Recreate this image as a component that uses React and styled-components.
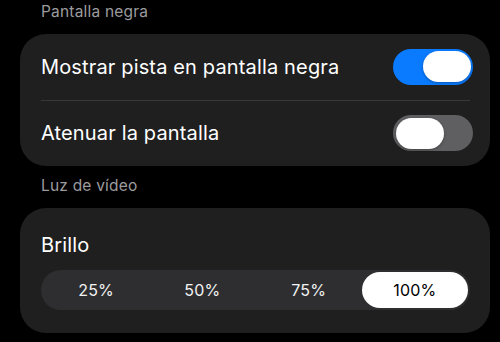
import React from 'react';
import styled, { createGlobalStyle } from 'styled-components';

const GlobalStyle = createGlobalStyle`
  html, body {
    margin: 0;
    padding: 0;
    background: #000;
  }
  body {
    font-family: Inter, "Noto Sans", "Liberation Sans", sans-serif;
    -webkit-font-smoothing: antialiased;
  }
`;

const options = ['25%', '50%', '75%', '100%'];

function App() {
  return (
    <Page>
      <GlobalStyle />
      <SectionTitle $top={2}>Pantalla negra</SectionTitle>
      <Card>
        <Row>
          <RowLabel>Mostrar pista en pantalla negra</RowLabel>
          <Toggle $on />
        </Row>
        <Divider />
        <Row>
          <RowLabel>Atenuar la pantalla</RowLabel>
          <Toggle />
        </Row>
      </Card>

      <SectionTitle $top={10}>Luz de vídeo</SectionTitle>
      <Card>
        <BrightnessBlock>
          <RowLabel>Brillo</RowLabel>
          <Segmented>
            {options.map((o) => (
              <Segment key={o} $active={o === '100%'}>{o}</Segment>
            ))}
          </Segmented>
        </BrightnessBlock>
      </Card>
    </Page>
  );
}

export default App;

const Page = styled.div`
  width: 500px;
  height: 342px;
  overflow: hidden;
  background: #000;
  padding: 0 10px 0 20px;
  box-sizing: border-box;
  display: flex;
  flex-direction: column;
`;

const SectionTitle = styled.div`
  padding: ${(p) => p.$top}px 0 0 21px;
  margin-bottom: 12px;
  height: 20px;
  line-height: 20px;
  font-size: 15.5px;
  color: #9c9c9f;
  letter-spacing: 0.2px;
`;

const Card = styled.div`
  background: #1f1f1f;
  border-radius: 26px;
  padding: 0 17px 0 21px;
`;

const Row = styled.div`
  display: flex;
  align-items: center;
  justify-content: space-between;
  height: 65.5px;
`;

const RowLabel = styled.span`
  font-size: 20px;
  color: #fff;
  letter-spacing: 0.15px;
`;

const Divider = styled.div`
  height: 1px;
  margin-right: 3px;
  background: #38383a;
`;

const Toggle = styled.div`
  position: relative;
  width: 80px;
  height: 36px;
  border-radius: 18px;
  background: ${(p) => (p.$on ? '#0a7bff' : '#5f5f62')};
  flex-shrink: 0;

  &::after {
    content: '';
    position: absolute;
    top: 2.5px;
    left: ${(p) => (p.$on ? '30px' : '2.5px')};
    width: 48px;
    height: 31px;
    border-radius: 16px;
    background: #fff;
    box-shadow: 0 1px 3px rgba(0, 0, 0, 0.3);
  }
`;

const BrightnessBlock = styled.div`
  display: flex;
  flex-direction: column;
  gap: 13px;
  padding: 25px 3px 23px 0;

  ${RowLabel} {
    line-height: 24px;
  }
`;

const Segmented = styled.div`
  display: grid;
  grid-template-columns: repeat(4, 1fr);
  height: 40px;
  padding: 2px;
  box-sizing: border-box;
  border-radius: 20px;
  background: #2e2e30;
`;

const Segment = styled.div`
  display: flex;
  align-items: center;
  justify-content: center;
  border-radius: 18px;
  font-size: 16px;
  font-weight: 400;
  letter-spacing: 0.2px;
  color: ${(p) => (p.$active ? '#000' : '#f2f2f2')};
  background: ${(p) => (p.$active ? '#fff' : 'transparent')};
`;
